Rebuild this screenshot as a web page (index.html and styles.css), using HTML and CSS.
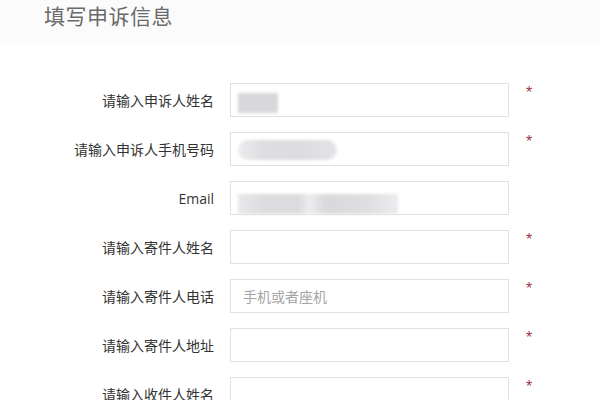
FILE: index.html
```html
<!DOCTYPE html>
<html lang="zh-CN">
<head>
<meta charset="utf-8">
<title>填写申诉信息</title>
<link rel="stylesheet" href="styles.css">
</head>
<body>
<header class="head">
  <h1 class="title">填写申诉信息</h1>
</header>
<main class="form">
  <div class="row">
    <label class="label">请输入申诉人姓名</label>
    <div class="field"><span class="blur b1"></span></div>
    <span class="req">*</span>
  </div>
  <div class="row">
    <label class="label">请输入申诉人手机号码</label>
    <div class="field"><span class="blur b2"></span></div>
    <span class="req">*</span>
  </div>
  <div class="row">
    <label class="label latin">Email</label>
    <div class="field"><span class="blur b3"></span></div>
    <span class="req"></span>
  </div>
  <div class="row">
    <label class="label">请输入寄件人姓名</label>
    <div class="field"></div>
    <span class="req">*</span>
  </div>
  <div class="row">
    <label class="label">请输入寄件人电话</label>
    <div class="field"><span class="ph">手机或者座机</span></div>
    <span class="req">*</span>
  </div>
  <div class="row">
    <label class="label">请输入寄件人地址</label>
    <div class="field"></div>
    <span class="req">*</span>
  </div>
  <div class="row">
    <label class="label">请输入收件人姓名</label>
    <div class="field"></div>
    <span class="req">*</span>
  </div>
</main>
</body>
</html>
```

FILE: styles.css
```css
html, body {
  margin: 0;
  padding: 0;
  background: #ffffff;
  font-family: "Noto Sans CJK SC", "Noto Sans", sans-serif;
  overflow: hidden;
}
.head {
  height: 43px;
  background: #fbfbfc;
  display: flex;
  align-items: center;
  padding-left: 44px;
  box-sizing: border-box;
}
.title {
  margin: 0;
  margin-top: -14px;
  font-size: 21px;
  font-weight: 400;
  color: #6a6a6a;
  letter-spacing: 0.5px;
}
.form {
  padding-top: 40px;
  display: flex;
  flex-direction: column;
  gap: 15px;
}
.row {
  display: grid;
  grid-template-columns: 214px 279px auto;
  column-gap: 16px;
  align-items: center;
  height: 34px;
}
.label {
  text-align: right;
  font-size: 14px;
  color: #333333;
  white-space: nowrap;
}
.latin {
  font-family: "Open Sans", "Noto Sans", sans-serif;
  font-size: 14px;
}
.field {
  height: 34px;
  box-sizing: border-box;
  border: 1px solid #e1e1e3;
  background: #ffffff;
  display: flex;
  align-items: center;
  padding-left: 12px;
  position: relative;
}
.ph {
  font-size: 14px;
  color: #a5a5a5;
}
.req {
  align-self: start;
  margin-top: 1px;
  margin-left: 1px;
  font-family: "Liberation Sans", sans-serif;
  font-size: 16px;
  line-height: 18px;
  color: #9b3a4a;
}
.blur {
  display: block;
  background: #d8d8dc;
  filter: blur(1.5px);
}
.b1 {
  width: 40px;
  height: 20px;
  margin-left: -5px;
  margin-top: 6px;
}
.b2 {
  width: 99px;
  height: 20px;
  margin-left: -5px;
  margin-top: 2px;
  border-radius: 10px;
  background: linear-gradient(90deg, #ececee 0%, #dedee1 25%, #dcdce0 60%, #e4e4e7 100%);
}
.b3 {
  width: 160px;
  height: 20px;
  margin-left: -5px;
  margin-top: 12px;
  background: linear-gradient(90deg, #e8e8ea 0%, #dcdcdf 18%, #dcdcdf 38%, #ededef 45%, #d9d9dc 55%, #dedee1 80%, #ececee 100%);
}
```
